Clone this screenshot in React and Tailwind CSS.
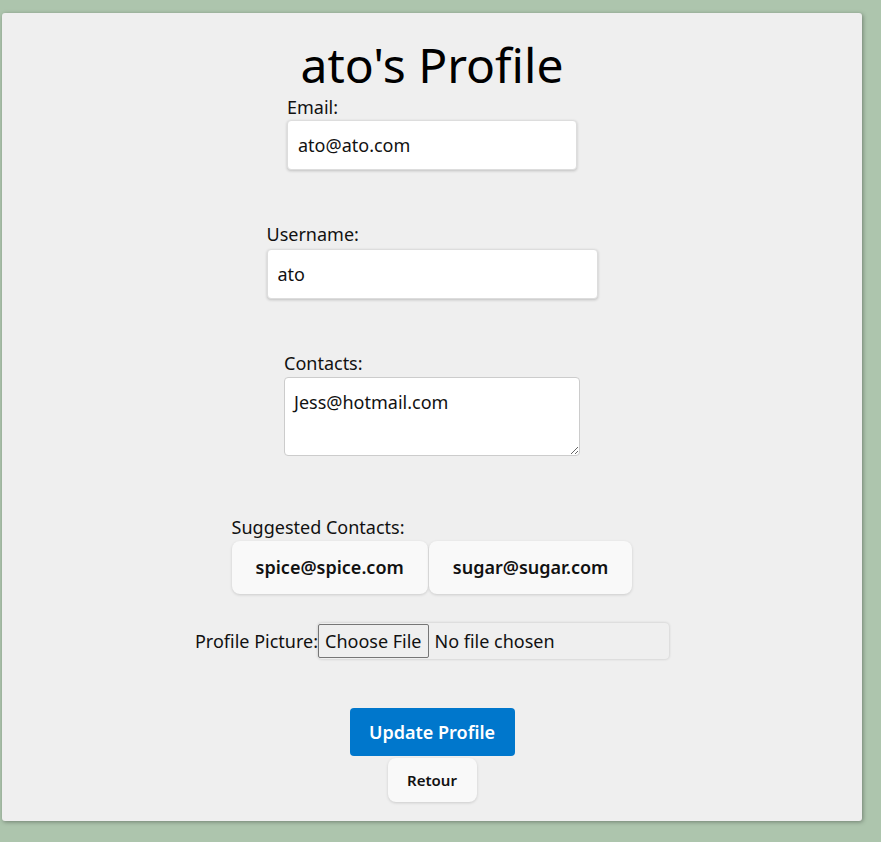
import React from 'react';

const font = { fontFamily: '"Noto Sans", "Open Sans", sans-serif' };

const Profile = () => (
  <div className="min-h-[842px] bg-[#adc5ad] pt-[13px] pl-[2px]" style={font}>
    <div className="w-[860px] h-[808px] bg-[#efefef] rounded-[3px] shadow-[1px_1px_4px_rgba(0,0,0,0.35)] flex flex-col items-center pt-[22px] text-[#111]">
      <h1 className="text-[48px] leading-[60px] font-normal text-black">ato's Profile</h1>

      {/* Email */}
      <div className="w-[290px]">
        <label className="block text-[18px] leading-[24px]">Email:</label>
        <input
          type="email"
          defaultValue="ato@ato.com"
          className="mt-[1px] w-[290px] h-[50px] bg-white rounded-[4px] border border-[#ddd] shadow-[0_1px_3px_rgba(0,0,0,0.2)] px-[10px] text-[18px] outline-none"
        />
      </div>

      {/* Username */}
      <div className="w-[331px] mt-[52px]">
        <label className="block text-[18px] leading-[24px]">Username:</label>
        <input
          type="text"
          defaultValue="ato"
          className="mt-[3px] w-[331px] h-[50px] bg-white rounded-[4px] border border-[#ddd] shadow-[0_1px_3px_rgba(0,0,0,0.2)] px-[10px] text-[18px] outline-none"
        />
      </div>

      {/* Contacts */}
      <div className="w-[296px] mt-[52px]">
        <label className="block text-[18px] leading-[24px]">Contacts:</label>
        <textarea
          defaultValue="Jess@hotmail.com"
          className="mt-[2px] block w-[296px] h-[79px] bg-white rounded-[4px] border border-[#ccc] px-[9px] pt-[12px] text-[18px] leading-[24px] outline-none"
        />
      </div>

      {/* Suggested */}
      <div className="mt-[59px]">
        <div className="text-[18px] leading-[24px]">Suggested Contacts:</div>
        <div className="mt-[2px] flex gap-px">
          <button className="h-[53px] px-[24px] bg-[#f9f9f9] rounded-[8px] shadow-[0_1px_3px_rgba(0,0,0,0.15)] text-[18px] font-semibold">
            spice@spice.com
          </button>
          <button className="h-[53px] px-[24px] bg-[#f9f9f9] rounded-[8px] shadow-[0_1px_3px_rgba(0,0,0,0.15)] text-[18px] font-semibold">
            sugar@sugar.com
          </button>
        </div>
      </div>

      {/* Profile picture */}
      <div className="mt-[29px] flex items-center text-[18px]">
        <span>Profile Picture:</span>
        <div className="w-[351px] h-[36px] rounded-[4px] bg-[#efefef] shadow-[0_0_3px_rgba(0,0,0,0.2)] flex items-center">
          <span className="h-[34px] px-[6px] flex items-center border border-[#767676] rounded-[2px] bg-[#efefef]">Choose File</span>
          <span className="ml-[6px]">No file chosen</span>
        </div>
      </div>

      {/* Actions */}
      <button className="mt-[49px] w-[165px] h-[48px] bg-[#0077cc] text-white rounded-[4px] text-[18px] font-semibold">
        Update Profile
      </button>
      <button className="mt-[2px] w-[89px] h-[44px] bg-[#f9f9f9] rounded-[8px] shadow-[0_1px_3px_rgba(0,0,0,0.15)] text-[15px] font-semibold">
        Retour
      </button>
    </div>
  </div>
);

export default function App() {
  return <Profile />;
}
